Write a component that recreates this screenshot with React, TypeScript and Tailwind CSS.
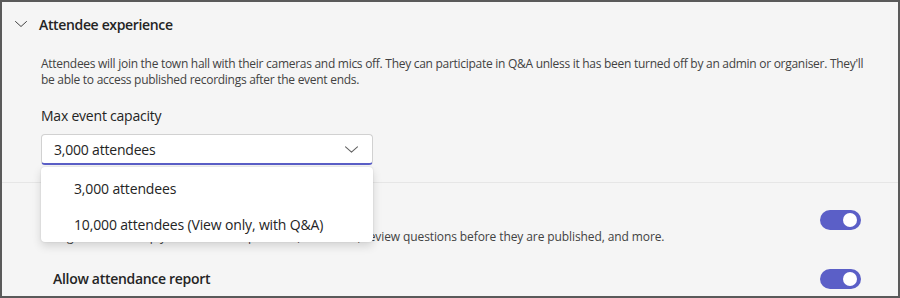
import React from "react";

function Chevron({ className }: { className?: string }) {
  return (
    <svg viewBox="0 0 12 6" className={className} fill="none">
      <path d="M0.5 0.5 L6 5.5 L11.5 0.5" stroke="currentColor" strokeWidth="1" strokeLinecap="round" strokeLinejoin="round" />
    </svg>
  );
}

function Toggle() {
  return (
    <div className="w-[41px] h-[20px] rounded-full bg-[#5b5fc7] flex items-center justify-end pr-[4px]">
      <div className="w-[14px] h-[14px] rounded-full bg-white" />
    </div>
  );
}

export default function App() {
  return (
    <div
      className="w-[900px] h-[298px] overflow-hidden border-2 border-[#5a5a5a] bg-[#f5f5f5] text-[#242424]"
      style={{ fontFamily: '"Open Sans", "Noto Sans", sans-serif' }}
    >
      {/* Attendee experience */}
      <div className="pb-[17px] border-b border-[#e6e6e6]">
        <div className="flex items-center h-[20px] mt-[12px] pl-[13px]">
          <Chevron className="w-[12px] h-[6px] text-[#424242]" />
          <span className="ml-[12px] text-[14px] font-semibold tracking-[-0.35px]">Attendee experience</span>
        </div>
        <p className="mt-[22px] ml-[39px] text-[12px] leading-[16px] tracking-[-0.28px] text-[#424242] whitespace-nowrap">
          Attendees will join the town hall with their cameras and mics off. They can participate in Q&amp;A unless it has been turned off by an admin or organiser. They'll
          <br />
          be able to access published recordings after the event ends.
        </p>
        <div className="mt-[18px] ml-[39px] text-[14px] leading-[20px] tracking-[-0.22px]">Max event capacity</div>
        <div className="relative mt-[8px] ml-[39px] w-[332px]">
          <div className="h-[31px] bg-white rounded-[4px] border border-[#d1d1d1] border-b-2 border-b-[#5b5fc7] flex items-center justify-between pl-[12px] pr-[14px]">
            <span className="text-[14px] tracking-[-0.2px]">3,000 attendees</span>
            <Chevron className="w-[13px] h-[7px] text-[#616161]" />
          </div>
          <div className="absolute left-0 top-[33px] w-full bg-white rounded-[4px] pt-[3px] shadow-[0_0_2px_rgba(0,0,0,0.12),0_4px_10px_rgba(0,0,0,0.14)] z-10">
            <div className="h-9 flex items-center pl-[33px] text-[14px] tracking-[-0.15px]">3,000 attendees</div>
            <div className="h-9 flex items-center pl-[33px] text-[14px] tracking-[-0.15px]">10,000 attendees (View only, with Q&amp;A)</div>
          </div>
        </div>
      </div>

      {/* Q&A */}
      <div className="flex items-center justify-between pl-[51px] pr-[37px] pt-[11px]">
        <div>
          <div className="text-[14px] leading-[20px] font-semibold">Q&amp;A</div>
          <div className="mt-[15px] text-[12px] leading-[16px] tracking-[-0.1px] text-[#424242] whitespace-nowrap">
            Organisers can reply to attendees' questions, moderate, review questions before they are published, and more.
          </div>
        </div>
        <Toggle />
      </div>

      {/* Attendance report */}
      <div className="flex items-center justify-between pl-[51px] pr-[37px] mt-[24px]">
        <div className="text-[14px] leading-[20px] font-semibold tracking-[-0.3px]">Allow attendance report</div>
        <Toggle />
      </div>
    </div>
  );
}
